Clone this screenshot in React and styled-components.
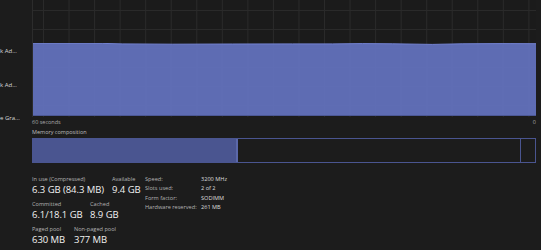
import React from 'react';
import styled, { createGlobalStyle } from 'styled-components';

const GlobalStyle = createGlobalStyle`
  html, body {
    margin: 0;
    padding: 0;
    background: #1c1c1c;
  }
  body {
    font-family: "Open Sans", "Liberation Sans", sans-serif;
    color: #e6e6e6;
    overflow: hidden;
  }
`;

const Page = styled.div`
  display: flex;
  width: 541px;
  height: 250px;
  overflow: hidden;
`;

const Sidebar = styled.div`
  width: 32px;
  flex: none;
  display: flex;
  flex-direction: column;
  gap: 25px;
  padding-top: 47px;
  box-sizing: border-box;
`;

const SideLabel = styled.div`
  height: 8.5px;
  white-space: nowrap;
  font-size: 6px;
  line-height: 8.5px;
  color: #d8d8d8;
`;

const Main = styled.div`
  width: 504px;
  flex: none;
  display: flex;
  flex-direction: column;
`;

const Chart = styled.div`
  position: relative;
  height: 118px;
  background-color: #1b1b1b;
  background-image:
    linear-gradient(to bottom, #2a2a2a 1px, transparent 1px),
    linear-gradient(to right, #2a2a2a 1px, transparent 1px);
  background-size: 100% 19px, 25.55px 100%;
  background-position: 0 10px, 10px 0;
  border-left: 1px solid #2c2c2c;
  box-sizing: border-box;
  overflow: hidden;
`;

const Area = styled.svg`
  position: absolute;
  left: 0;
  bottom: 1px;
  width: 100%;
  height: 73px;
  display: block;
`;

const AxisRow = styled.div`
  display: flex;
  justify-content: space-between;
  height: 10px;
  padding-top: 1px;
  font-size: 5.5px;
  line-height: 9px;
  color: #a9a9a9;
`;

const SectionLabel = styled.div`
  font-size: 5.5px;
  line-height: 9px;
  height: 10px;
  color: #bdbdbd;
`;

const Composition = styled.div`
  display: flex;
  height: 25px;
  border: 1px solid #4a5590;
  box-sizing: border-box;
`;

const Segment = styled.div`
  flex: ${(p) => p.$grow ? '1 1 auto' : 'none'};
  width: ${(p) => p.$w ? `${p.$w}px` : 'auto'};
  background: ${(p) => p.$fill || 'transparent'};
  border-right: ${(p) => p.$edge ? `${p.$edgeW || 1}px solid ${p.$edge}` : 'none'};
`;

const Stats = styled.div`
  display: flex;
  padding-top: 12px;
`;

const StatsLeft = styled.div`
  width: 113px;
  flex: none;
  display: flex;
  flex-direction: column;
`;

const StatRow = styled.div`
  display: flex;
  height: 25px;
`;

const Stat = styled.div`
  width: ${(p) => p.$w ? `${p.$w}px` : 'auto'};
  flex: none;
  display: flex;
  flex-direction: column;
  white-space: nowrap;
`;

const Label = styled.div`
  font-size: 5.6px;
  line-height: 8px;
  color: #b4b4b4;
`;

const Value = styled.div`
  font-size: 9.5px;
  line-height: 14px;
  color: #f2f2f2;
  letter-spacing: -0.05px;
`;

const Specs = styled.div`
  display: grid;
  grid-template-columns: 56px auto;
  grid-auto-rows: 9.35px;
  align-content: start;
  font-size: 5.6px;
  line-height: 9.35px;
  white-space: nowrap;
`;

const SpecKey = styled.div`
  color: #b4b4b4;
`;

const SpecVal = styled.div`
  color: #dcdcdc;
`;

const areaPath =
  'M0 0.4 L70 0.4 L90 0.9 L140 1.2 L200 1.0 L260 0.9 L300 0.9 L330 0.6 ' +
  'L360 0.8 L400 1.4 L430 0.8 L470 0.6 L504 0.7 L504 73 L0 73 Z';
const topPath =
  'M0 0.4 L70 0.4 L90 0.9 L140 1.2 L200 1.0 L260 0.9 L300 0.9 L330 0.6 ' +
  'L360 0.8 L400 1.4 L430 0.8 L470 0.6 L504 0.7';

const sideLabels = ['k Ad...', 'k Ad...', 'e Gra...'];

const specs = [
  ['Speed:', '3200 MHz'],
  ['Slots used:', '2 of 2'],
  ['Form factor:', 'SODIMM'],
  ['Hardware reserved:', '261 MB'],
];

export default function App() {
  return (
    <>
      <GlobalStyle />
      <Page>
        <Sidebar>
          {sideLabels.map((l, i) => (
            <SideLabel key={i}>{l}</SideLabel>
          ))}
        </Sidebar>
        <Main>
          <Chart>
            <Area viewBox="0 0 504 73" preserveAspectRatio="none">
              <path d={areaPath} fill="rgba(97, 112, 185, 0.97)" />
              <path d={topPath} fill="none" stroke="#7383d2" strokeWidth="1" />
              <line x1="0" y1="72.5" x2="504" y2="72.5" stroke="#4c5895" strokeWidth="1" />
            </Area>
          </Chart>
          <AxisRow>
            <span>60 seconds</span>
            <span>0</span>
          </AxisRow>
          <SectionLabel>Memory composition</SectionLabel>
          <Composition>
            <Segment $w={203} $fill="#4a5590" $edge="#5b68aa" $edgeW={2} />
            <Segment $grow $edge="#4a5590" />
            <Segment $w={14} />
          </Composition>
          <Stats>
            <StatsLeft>
              <StatRow>
                <Stat $w={80}>
                  <Label>In use (Compressed)</Label>
                  <Value>6.3 GB (84.3 MB)</Value>
                </Stat>
                <Stat>
                  <Label>Available</Label>
                  <Value>9.4 GB</Value>
                </Stat>
              </StatRow>
              <StatRow>
                <Stat $w={58}>
                  <Label>Committed</Label>
                  <Value>6.1/18.1 GB</Value>
                </Stat>
                <Stat>
                  <Label>Cached</Label>
                  <Value>8.9 GB</Value>
                </Stat>
              </StatRow>
              <StatRow>
                <Stat $w={42}>
                  <Label>Paged pool</Label>
                  <Value>630 MB</Value>
                </Stat>
                <Stat>
                  <Label>Non-paged pool</Label>
                  <Value>377 MB</Value>
                </Stat>
              </StatRow>
            </StatsLeft>
            <Specs>
              {specs.map(([k, v]) => (
                <React.Fragment key={k}>
                  <SpecKey>{k}</SpecKey>
                  <SpecVal>{v}</SpecVal>
                </React.Fragment>
              ))}
            </Specs>
          </Stats>
        </Main>
      </Page>
    </>
  );
}
